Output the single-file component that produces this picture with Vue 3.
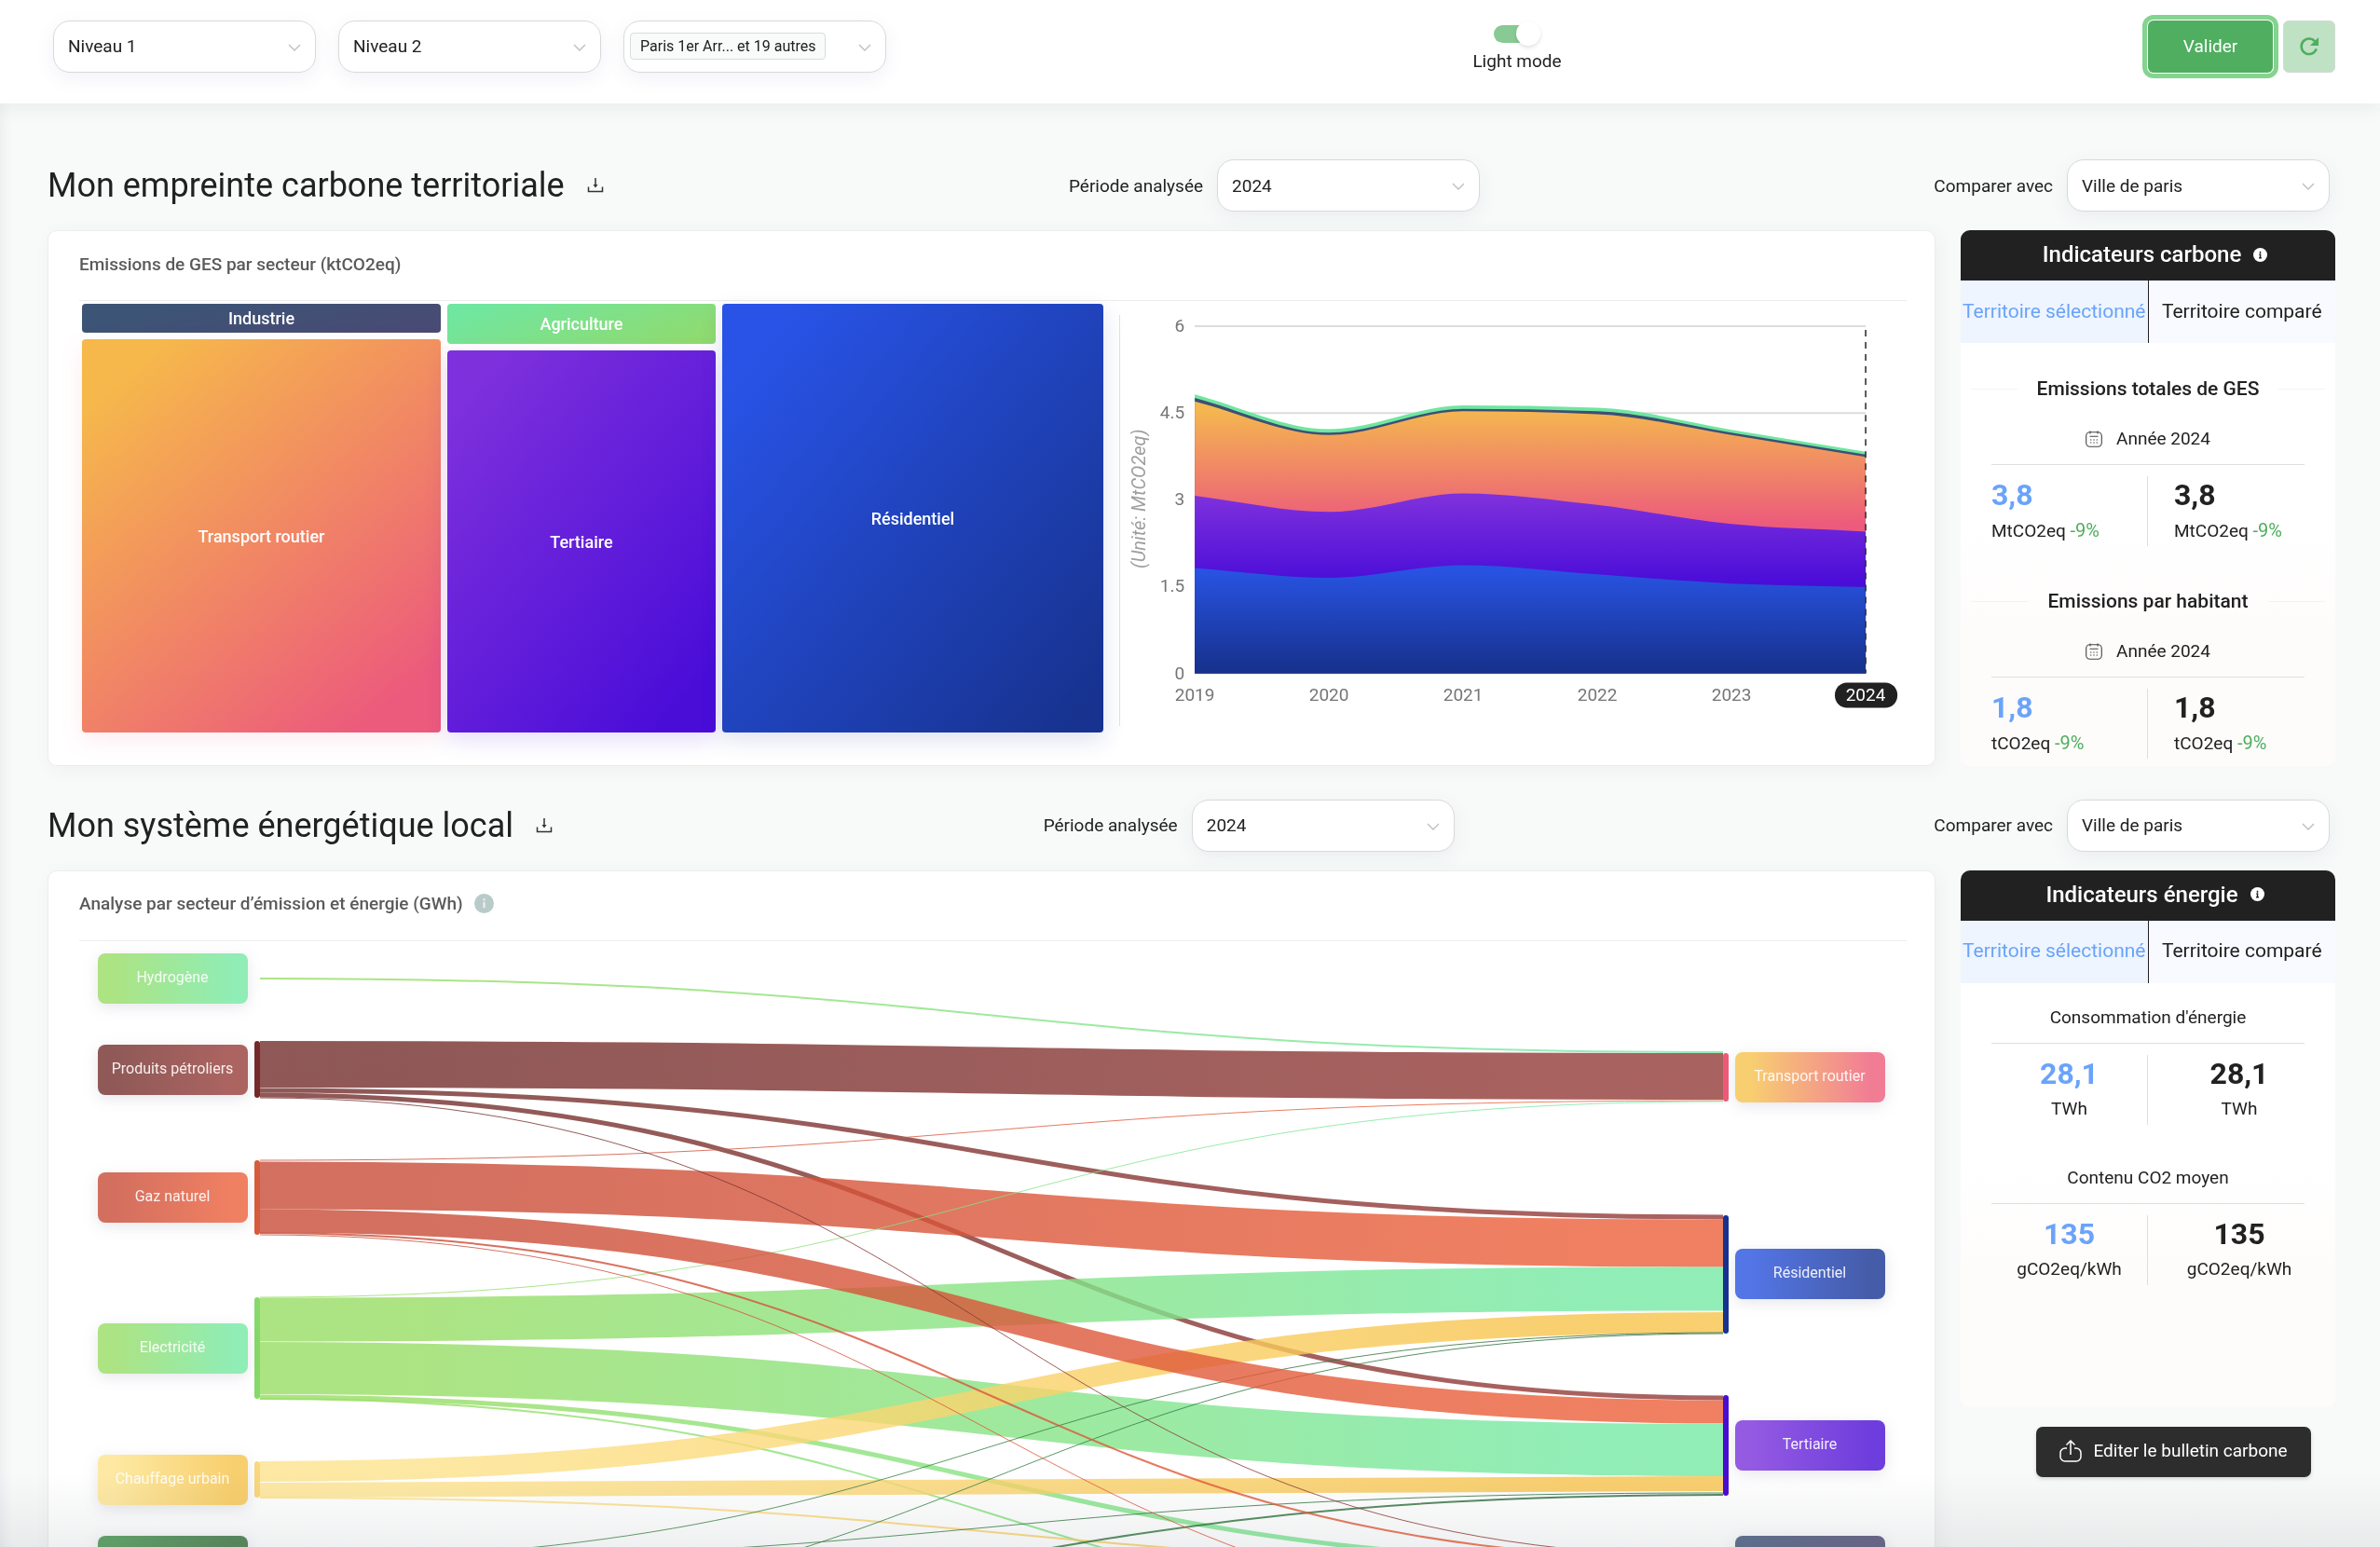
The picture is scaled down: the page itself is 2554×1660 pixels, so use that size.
<template>
  <div class="page">
    <header class="topbar">
      <div class="filters">
        <div class="select-box">
          <select v-model="level1" aria-label="Niveau 1">
            <option>Niveau 1</option>
          </select>
          <svg class="chevron" viewBox="0 0 14 10"><path d="M1 2l6 6 6-6" /></svg>
        </div>
        <div class="select-box">
          <select v-model="level2" aria-label="Niveau 2">
            <option>Niveau 2</option>
          </select>
          <svg class="chevron" viewBox="0 0 14 10"><path d="M1 2l6 6 6-6" /></svg>
        </div>
        <div class="select-box">
          <button type="button" class="multi" aria-haspopup="listbox">
            <span class="tag">Paris 1er Arr... et 19 autres</span>
          </button>
          <svg class="chevron" viewBox="0 0 14 10"><path d="M1 2l6 6 6-6" /></svg>
        </div>
      </div>
      <label class="mode">
        <input v-model="lightMode" type="checkbox" class="mode-input" />
        <span class="switch"></span>
        <span>Light mode</span>
      </label>
      <div class="actions">
        <button type="button" class="btn-validate">Valider</button>
        <button type="button" class="btn-reset" aria-label="Réinitialiser">
          <svg viewBox="0 0 24 24">
            <path d="M20.4 14.6A9 9 0 1 1 18.6 5.8" fill="none" stroke="#4fae5f" stroke-width="2.8" />
            <path d="M23 1v10H13z" fill="#4fae5f" />
          </svg>
        </button>
      </div>
    </header>

    <main class="content">
      <!-- empreinte carbone -->
      <section>
        <div class="section-head first">
          <div class="title">
            <h1>Mon empreinte carbone territoriale</h1>
            <button type="button" class="btn-download" aria-label="Télécharger">
              <svg viewBox="0 0 18 18"><path d="M9 1v9M1.5 10.5v5h15v-5" /><path class="head" d="M6.5 8h5L9 11.5z" /></svg>
            </button>
          </div>
          <div class="field">
            <label for="period-carbon">Période analysée</label>
            <div class="select-box">
              <select id="period-carbon" v-model="periodCarbon">
                <option>2024</option>
              </select>
              <svg class="chevron" viewBox="0 0 14 10"><path d="M1 2l6 6 6-6" /></svg>
            </div>
          </div>
          <div class="field">
            <label for="compare-carbon">Comparer avec</label>
            <div class="select-box">
              <select id="compare-carbon" v-model="compareCarbon">
                <option>Ville de paris</option>
              </select>
              <svg class="chevron" viewBox="0 0 14 10"><path d="M1 2l6 6 6-6" /></svg>
            </div>
          </div>
        </div>

        <div class="section-body">
          <div class="card">
            <h2 class="card-title">Emissions de GES par secteur (ktCO2eq)</h2>
            <div class="charts">
              <div class="treemap">
                <div v-for="(col, i) in treemap" :key="i" class="treemap-col" :style="{ flexGrow: col.size }">
                  <div
                    v-for="cell in col.cells"
                    :key="cell.name"
                    class="cell"
                    :class="cell.cls"
                    :style="{ flexGrow: cell.size }"
                  >
                    {{ cell.name }}
                  </div>
                </div>
              </div>
              <div class="area-chart">
                <svg viewBox="0 0 842 460">
                  <defs>
                    <linearGradient
                      v-for="s in series"
                      :id="'area-' + s.id"
                      :key="s.id"
                      gradientUnits="userSpaceOnUse"
                      x1="0"
                      :y1="yPos(Math.max(...s.values))"
                      x2="0"
                      :y2="yPos(s.bottom)"
                    >
                      <stop offset="0.05" :stop-color="s.from" />
                      <stop offset="0.95" :stop-color="s.to" />
                    </linearGradient>
                  </defs>
                  <g v-for="tick in yTicks" :key="tick">
                    <line class="grid" :x1="x0" :x2="x1" :y1="yPos(tick)" :y2="yPos(tick)" />
                    <text class="axis" :x="x0 - 11" :y="yPos(tick) + 6" text-anchor="end">{{ tick }}</text>
                  </g>
                  <path v-for="s in series" :key="s.id" :d="areaPath(s.values)" :fill="`url(#area-${s.id})`" />
                  <line class="cursor" :x1="x1" :x2="x1" :y1="yPos(6) + 4" :y2="yPos(0)" />
                  <rect x="765" y="406" width="67" height="27" rx="13" fill="#212121" />
                  <text
                    v-for="(year, i) in years"
                    :key="year"
                    class="axis"
                    :class="{ active: year === 2024 }"
                    :x="xPos(i)"
                    y="425"
                    text-anchor="middle"
                  >
                    {{ year }}
                  </text>
                  <text class="unit-label" text-anchor="middle" transform="translate(26 209) rotate(-90)">
                    (Unité: MtCO2eq)
                  </text>
                </svg>
              </div>
            </div>
          </div>

          <aside class="panel">
            <h3 class="panel-head">
              Indicateurs carbone
              <svg class="info" viewBox="0 0 16 16">
                <circle cx="8" cy="8" r="8" fill="#fff" />
                <path d="M8 4v2M6.8 7.5H8v4M6.5 11.5h3" stroke="#212121" stroke-width="1.6" fill="none" />
              </svg>
            </h3>
            <div class="tabs">
              <button type="button" class="tab active">Territoire sélectionné</button>
              <button type="button" class="tab">Territoire comparé</button>
            </div>
            <div class="carbon-body">
              <div v-for="block in carbonBlocks" :key="block.title" class="carbon-block">
                <h4 class="ruled"><span>{{ block.title }}</span></h4>
                <p class="year">
                  <svg viewBox="0 0 18 18">
                    <rect x="0.7" y="1.7" width="16.6" height="15.6" rx="4" />
                    <path d="M5 0.5v3M13 0.5v3M4.5 6.2h9" />
                    <path d="M5 10h1.4M8.3 10h1.4M11.6 10H13M5 13h1.4M8.3 13h1.4M11.6 13H13" />
                  </svg>
                  Année 2024
                </p>
                <div class="figures">
                  <div class="figure selected">
                    <strong>{{ block.value }}</strong>
                    <span>{{ block.unit }} <em>-9%</em></span>
                  </div>
                  <div class="figure">
                    <strong>{{ block.value }}</strong>
                    <span>{{ block.unit }} <em>-9%</em></span>
                  </div>
                </div>
              </div>
            </div>
          </aside>
        </div>
      </section>

      <!-- système énergétique -->
      <section>
        <div class="section-head">
          <div class="title">
            <h1>Mon système énergétique local</h1>
            <button type="button" class="btn-download" aria-label="Télécharger">
              <svg viewBox="0 0 18 18"><path d="M9 1v9M1.5 10.5v5h15v-5" /><path class="head" d="M6.5 8h5L9 11.5z" /></svg>
            </button>
          </div>
          <div class="field">
            <label for="period-energy">Période analysée</label>
            <div class="select-box">
              <select id="period-energy" v-model="periodEnergy">
                <option>2024</option>
              </select>
              <svg class="chevron" viewBox="0 0 14 10"><path d="M1 2l6 6 6-6" /></svg>
            </div>
          </div>
          <div class="field">
            <label for="compare-energy">Comparer avec</label>
            <div class="select-box">
              <select id="compare-energy" v-model="compareEnergy">
                <option>Ville de paris</option>
              </select>
              <svg class="chevron" viewBox="0 0 14 10"><path d="M1 2l6 6 6-6" /></svg>
            </div>
          </div>
        </div>

        <div class="section-body">
          <div class="card">
            <h2 class="card-title">
              Analyse par secteur d’émission et énergie (GWh)
              <svg class="info-grey" viewBox="0 0 22 22">
                <circle cx="11" cy="11" r="11" fill="#b9cbc9" />
                <path d="M11 5.5v2.4M11 9.5V16" stroke="#eef3f2" stroke-width="2" />
              </svg>
            </h2>
            <svg class="sankey" viewBox="0 0 1961 800">
              <defs>
                <linearGradient
                  v-for="(c, key) in energies"
                  :id="'link-' + key"
                  :key="key"
                  gradientUnits="userSpaceOnUse"
                  x1="194"
                  y1="0"
                  x2="1764"
                  y2="0"
                >
                  <stop offset="0.1" :stop-color="c.from" />
                  <stop offset="0.9" :stop-color="c.to" />
                </linearGradient>
                <linearGradient v-for="n in nodes" :id="'node-' + n.id" :key="n.id">
                  <stop offset="0.1" :stop-color="n.from" />
                  <stop offset="0.9" :stop-color="n.to" />
                </linearGradient>
              </defs>
              <path
                v-for="(l, i) in links"
                :key="i"
                class="link"
                :d="linkPath(l)"
                :stroke="`url(#link-${l[0]})`"
                :stroke-width="l[3]"
              />
              <g v-for="n in nodes" :key="n.id">
                <rect
                  v-if="n.bar"
                  :x="n.side === 'left' ? 188 : 1764"
                  :y="n.bar[0]"
                  width="6"
                  :height="n.bar[1] - n.bar[0]"
                  rx="3"
                  :fill="n.barColor"
                />
                <rect
                  class="pill"
                  :x="n.side === 'left' ? 20 : 1777"
                  :y="n.y"
                  width="161"
                  height="54"
                  rx="8"
                  :fill="`url(#node-${n.id})`"
                />
                <text
                  v-if="n.name"
                  class="pill-text"
                  :x="n.side === 'left' ? 100 : 1857"
                  :y="n.y + 31"
                  text-anchor="middle"
                >
                  {{ n.name }}
                </text>
              </g>
            </svg>
          </div>

          <div class="side">
            <aside class="panel">
              <h3 class="panel-head">
                Indicateurs énergie
                <svg class="info" viewBox="0 0 16 16">
                  <circle cx="8" cy="8" r="8" fill="#fff" />
                  <path d="M8 4v2M6.8 7.5H8v4M6.5 11.5h3" stroke="#212121" stroke-width="1.6" fill="none" />
                </svg>
              </h3>
              <div class="tabs">
                <button type="button" class="tab active">Territoire sélectionné</button>
                <button type="button" class="tab">Territoire comparé</button>
              </div>
              <div class="energy-body">
                <div v-for="block in energyBlocks" :key="block.title" class="energy-block">
                  <h4 class="plain">{{ block.title }}</h4>
                  <div class="figures centered">
                    <div class="figure selected">
                      <strong>{{ block.value }}</strong>
                      <span>{{ block.unit }}</span>
                    </div>
                    <div class="figure">
                      <strong>{{ block.value }}</strong>
                      <span>{{ block.unit }}</span>
                    </div>
                  </div>
                </div>
              </div>
            </aside>
            <button type="button" class="btn-edit">
              <svg viewBox="0 0 24 24">
                <path d="M8 9H6a5 5 0 0 0-5 5v4a5 5 0 0 0 5 5h12a5 5 0 0 0 5-5v-4a5 5 0 0 0-5-5h-2" />
                <path d="M12 16V1.500M7.500 5.500L12 1l4.500 4.500" />
              </svg>
              Editer le bulletin carbone
            </button>
          </div>
        </div>
      </section>
    </main>
    <div class="fade"></div>
  </div>
</template>

<script setup>
import { ref } from "vue";

const level1 = ref("Niveau 1");
const level2 = ref("Niveau 2");
const lightMode = ref(true);
const periodCarbon = ref("2024");
const periodEnergy = ref("2024");
const compareCarbon = ref("Ville de paris");
const compareEnergy = ref("Ville de paris");

const treemap = [
  {
    size: 385,
    cells: [
      { name: "Industrie", cls: "industry", size: 31 },
      { name: "Transport routier", cls: "transport", size: 422 },
    ],
  },
  {
    size: 288,
    cells: [
      { name: "Agriculture", cls: "agriculture", size: 43 },
      { name: "Tertiaire", cls: "tertiary", size: 410 },
    ],
  },
  { size: 409, cells: [{ name: "Résidentiel", cls: "residential", size: 460 }] },
];

// area chart
const years = [2019, 2020, 2021, 2022, 2023, 2024];
const yTicks = [0, 1.5, 3, 4.5, 6];
const x0 = 79;
const x1 = 798;
const xPos = (i) => x0 + (i * (x1 - x0)) / 5;
const yPos = (v) => 396 - v * 62;

// cumulated values, largest first. bottom = end of the band's gradient
const series = [
  { id: "agriculture", from: "#70e6a0", to: "#70e6a0", bottom: 0, values: [4.82, 4.22, 4.63, 4.59, 4.21, 3.83] },
  { id: "industry", from: "#3c5075", to: "#3c5075", bottom: 0, values: [4.76, 4.16, 4.57, 4.53, 4.16, 3.78] },
  { id: "transport", from: "#f5b84e", to: "#ec5a7c", bottom: 2.45, values: [4.7, 4.12, 4.53, 4.48, 4.12, 3.74] },
  { id: "tertiary", from: "#7d30dc", to: "#4a0dd8", bottom: 1.49, values: [3.07, 2.79, 3.11, 2.91, 2.58, 2.45] },
  { id: "residential", from: "#2853e2", to: "#17328f", bottom: 0, values: [1.82, 1.65, 1.87, 1.71, 1.55, 1.49] },
];

// smooth curve, flat on local extremes
const areaPath = (values) => {
  const pts = values.map((v, i) => [xPos(i), yPos(v)]);
  const step = pts[1][0] - pts[0][0];
  const slopes = pts.map((p, i) => {
    if (i === 0) return (pts[1][1] - p[1]) / step;
    if (i === pts.length - 1) return (p[1] - pts[i - 1][1]) / step;
    const a = (p[1] - pts[i - 1][1]) / step;
    const b = (pts[i + 1][1] - p[1]) / step;
    return a * b <= 0 ? 0 : Math.sign(a) * Math.min(Math.abs(a), Math.abs(b), Math.abs(a + b) / 4) * 2;
  });
  let d = `M${pts[0][0]} ${pts[0][1]}`;
  for (let i = 1; i < pts.length; i++) {
    const [px, py] = pts[i - 1];
    const [x, y] = pts[i];
    d += `C${px + step / 3} ${py + (slopes[i - 1] * step) / 3} ${x - step / 3} ${y - (slopes[i] * step) / 3} ${x} ${y}`;
  }
  return `${d}V${yPos(0)}H${x0}Z`;
};

// sankey
const energies = {
  oil: { from: "#732f2d", to: "#933b38" },
  gas: { from: "#c84c38", to: "#ec603a" },
  elec: { from: "#98dd64", to: "#76e9a4" },
  heat: { from: "#fde38d", to: "#f7c34b" },
  wood: { from: "#3f8f4c", to: "#2c6b3a" },
};

const nodes = [
  { id: "h2", side: "left", name: "Hydrogène", y: 13, from: "#ace383", to: "#90edb5" },
  { id: "oil", side: "left", name: "Produits pétroliers", y: 111, bar: [107, 168], barColor: "#742a2a", from: "#8f5957", to: "#ac6461" },
  { id: "gas", side: "left", name: "Gaz naturel", y: 248, bar: [235, 315], barColor: "#d75c3c", from: "#d36f5f", to: "#f08062" },
  { id: "elec", side: "left", name: "Electricité", y: 410, bar: [382, 491], barColor: "#86d96b", from: "#ace383", to: "#90edb5" },
  { id: "heat", side: "left", name: "Chauffage urbain", y: 551, bar: [558, 597], barColor: "#fbd97f", from: "#fde9a3", to: "#f8cf6e" },
  { id: "wood", side: "left", y: 638, from: "#65a56d", to: "#5c8c62" },
  { id: "transport", side: "right", name: "Transport routier", y: 119, bar: [120, 172], barColor: "#f05a78", from: "#f8cf70", to: "#f17d95" },
  { id: "residential", side: "right", name: "Résidentiel", y: 330, bar: [294, 421], barColor: "#17328f", from: "#5375e6", to: "#455ca8" },
  { id: "tertiary", side: "right", name: "Tertiaire", y: 514, bar: [487, 595], barColor: "#4a0dd2", from: "#945ae2", to: "#6e3ddd" },
  { id: "industry", side: "right", y: 638, from: "#637391", to: "#6d6a8c" },
];

// [energy, y source, y target, thickness]
const links = [
  ["elec", 40, 119, 2],
  ["oil", 132, 145, 50],
  ["oil", 160, 296, 5],
  ["oil", 165, 490, 5],
  ["gas", 235, 171, 1],
  ["gas", 262, 324, 51],
  ["elec", 382, 172, 1],
  ["elec", 406, 373, 47],
  ["elec", 458, 546, 56],
  ["elec", 489, 669, 5],
  ["elec", 491, 738, 2],
  ["heat", 569, 409, 22],
  ["heat", 589, 582, 16],
  ["heat", 597, 671, 2],
  ["wood", 664, 420, 1],
  ["wood", 732, 421, 1],
  ["wood", 665, 592, 1],
  ["wood", 730, 594, 2],
  ["gas", 300, 505, 25],
  ["gas", 313, 663, 2],
  ["gas", 315, 736, 1],
  ["oil", 168, 660, 1],
];
const linkPath = ([, from, to]) => `M194 ${from}C979 ${from} 979 ${to} 1764 ${to}`;

const carbonBlocks = [
  { title: "Emissions totales de GES", value: "3,8", unit: "MtCO2eq" },
  { title: "Emissions par habitant", value: "1,8", unit: "tCO2eq" },
];
const energyBlocks = [
  { title: "Consommation d'énergie", value: "28,1", unit: "TWh" },
  { title: "Contenu CO2 moyen", value: "135", unit: "gCO2eq/kWh" },
];
</script>

<style>
body {
  margin: 0;
  background: #f8faf9;
}
</style>

<style scoped>
* {
  box-sizing: border-box;
}
.page {
  position: relative;
  height: 100vh;
  overflow: hidden;
  background: #f8faf9;
  color: #212121;
  font-family: Roboto, "Liberation Sans", sans-serif;
  font-size: 19px;
  box-shadow: inset 12px 0 14px -10px rgba(40, 50, 90, 0.08);
}
h1,
h2,
h3,
h4,
p {
  margin: 0;
}
button,
select {
  font: inherit;
  color: inherit;
  border: none;
  cursor: pointer;
}
.topbar {
  display: flex;
  align-items: center;
  justify-content: space-between;
  height: 111px;
  padding: 0 48px 12px 57px;
  background: #fff;
  box-shadow: 0 4px 20px rgba(30, 50, 60, 0.08);
}
.filters {
  display: flex;
  gap: 24px;
}
.select-box {
  position: relative;
  width: 282px;
}
.select-box select,
.multi {
  appearance: none;
  display: block;
  width: 100%;
  height: 56px;
  padding: 0 15px;
  background: #fff;
  border: 1px solid #d9d9d9;
  border-radius: 18px;
  box-shadow: 0 6px 20px rgba(80, 90, 150, 0.08);
  text-align: left;
}
.select-box .multi {
  padding: 0 6px;
}
.tag {
  display: inline-block;
  padding: 0 10px;
  line-height: 27px;
  font-size: 16px;
  background: #f9fbfa;
  border: 1px solid #dadcdb;
  border-radius: 4px;
}
.chevron {
  position: absolute;
  top: 24px;
  right: 16px;
  width: 14px;
  height: 10px;
  fill: none;
  stroke: #bdbdbd;
  stroke-width: 1.3;
  pointer-events: none;
}
.mode {
  display: flex;
  flex-direction: column;
  align-items: center;
  gap: 4px;
  cursor: pointer;
}
.mode-input {
  position: absolute;
  opacity: 0;
}
.switch {
  display: flex;
  align-items: center;
  width: 50px;
  height: 28px;
}
.switch::before {
  content: "";
  width: 38px;
  height: 19px;
  margin-right: -14px;
  border-radius: 10px;
  background: #88c994;
}
.switch::after {
  content: "";
  width: 26px;
  height: 26px;
  border-radius: 50%;
  background: #fff;
  box-shadow: 0 2px 4px rgba(0, 0, 0, 0.12);
}
.actions {
  display: flex;
  justify-content: flex-end;
  gap: 11px;
}
.btn-validate {
  width: 134px;
  height: 56px;
  color: #fff;
  background: #4fae5f;
  border-radius: 6px;
  box-shadow: 0 0 0 1px #fff, 0 0 0 6px #84d38f;
}
.btn-reset {
  display: flex;
  align-items: center;
  justify-content: center;
  width: 56px;
  height: 56px;
  background: #bfe2c4;
  border: 1px solid #d3d9d4;
  border-radius: 6px;
}
.btn-reset svg {
  width: 22px;
  height: 22px;
}
.content {
  padding: 0 48px 0 51px;
}
.section-head {
  display: flex;
  align-items: center;
  justify-content: space-between;
  padding: 36px 6px 20px 0;
}
.section-head.first {
  padding-top: 60px;
}
.title {
  display: flex;
  align-items: center;
  gap: 24px;
  padding-right: 12px;
}
h1 {
  font-size: 36px;
  font-weight: 400;
}
.btn-download {
  padding: 0;
  background: none;
}
.btn-download svg {
  display: block;
  width: 18px;
  height: 18px;
  fill: none;
  stroke: #333;
  stroke-width: 1.5;
}
.btn-download .head {
  fill: #333;
  stroke: none;
}
.field {
  display: flex;
  align-items: center;
  gap: 15px;
}
.section-body {
  display: flex;
  gap: 27px;
}
.card {
  flex: 1;
  min-width: 0;
  padding: 0 30px 34px 33px;
  background: #fff;
  border: 1px solid #ebeeec;
  border-radius: 10px;
  box-shadow: 4px 4px 20px rgba(40, 60, 70, 0.05);
}
.card-title {
  display: flex;
  align-items: center;
  gap: 12px;
  height: 75px;
  padding-bottom: 4px;
  font-size: 19px;
  font-weight: 500;
  color: #5a5a5a;
  border-bottom: 1px solid #ededed;
}
.info-grey {
  width: 21px;
  height: 21px;
}
.charts {
  display: flex;
  padding-top: 3px;
}
.treemap {
  display: flex;
  flex: 1097;
  gap: 7px;
  padding-left: 3px;
  height: 460px;
}
.treemap-col {
  display: flex;
  flex: 1 1 0;
  flex-direction: column;
  gap: 7px;
}
.cell {
  display: flex;
  flex-basis: 0;
  align-items: center;
  justify-content: center;
  min-height: 0;
  color: #fff;
  font-size: 18px;
  font-weight: 500;
  border-radius: 4px;
}
.industry {
  background: linear-gradient(165deg, #3c5476 20%, #4a4a74);
}
.transport {
  background: linear-gradient(140deg, #f6b84b 10%, #ec5a7c 90%);
  box-shadow: 0 8px 24px rgba(236, 90, 124, 0.12);
}
.agriculture {
  background: linear-gradient(160deg, #70e6a0 10%, #8fdb70 90%);
}
.tertiary {
  background: linear-gradient(130deg, #7d30dc 10%, #4a0dd8 90%);
  box-shadow: 0 8px 24px rgba(74, 13, 216, 0.14);
}
.residential {
  background: linear-gradient(130deg, #2853e6 10%, #17328f 95%);
  box-shadow: 0 8px 24px rgba(23, 50, 143, 0.14);
}
.area-chart {
  position: relative;
  flex: 844;
  margin-left: 19px;
}
.area-chart::before {
  content: "";
  position: absolute;
  left: -2px;
  top: 12px;
  bottom: 8px;
  border-left: 1px solid #dfe0e2;
}
.area-chart svg {
  display: block;
  width: 100%;
}
.grid {
  stroke: #dcdcdc;
  stroke-width: 2;
}
.axis {
  font-size: 19px;
  fill: #757575;
}
.axis.active {
  fill: #fff;
}
.cursor {
  stroke: #333;
  stroke-width: 1.6;
  stroke-dasharray: 7 6;
}
.unit-label {
  font-size: 20px;
  font-style: italic;
  fill: #9e9e9e;
}
.panel {
  width: 402px;
  overflow: hidden;
  border-radius: 10px;
  background: linear-gradient(#fff 55%, #fefcfb 75%);
}
.panel-head {
  display: flex;
  align-items: center;
  justify-content: center;
  gap: 13px;
  height: 54px;
  padding: 0 0 2px 15px;
  font-size: 24px;
  font-weight: 500;
  color: #fff;
  background: #212121;
}
.info {
  width: 15px;
  height: 15px;
}
.tabs {
  display: flex;
  height: 67px;
}
.tab {
  flex: 1 1 0;
  padding: 0 0 2px;
  font-size: 21px;
  white-space: nowrap;
  background: #f9faff;
}
.tab.active {
  color: #6aa3fa;
  background: #eef5fe;
  border-right: 1px solid #212121;
}
.carbon-body {
  height: 453px;
}
.carbon-block {
  height: 228px;
  padding-top: 36px;
}
.ruled {
  display: flex;
  align-items: center;
  gap: 21px;
  padding: 0 11px;
  font-size: 21px;
  line-height: 26px;
  font-weight: 500;
}
.ruled::before,
.ruled::after {
  content: "";
  flex: 1;
  border-top: 1px solid #f1f2f4;
}
.year {
  display: flex;
  align-items: center;
  justify-content: center;
  gap: 15px;
  margin: 28px 33px 0;
  padding-bottom: 14px;
  line-height: 26px;
  border-bottom: 1px solid #dedede;
}
.year svg {
  width: 18px;
  height: 18px;
  fill: none;
  stroke: #444;
  stroke-width: 1.1;
}
.figures {
  display: flex;
  margin: 12px 33px 0;
}
.figure {
  display: flex;
  flex-direction: column;
  width: 50%;
  gap: 7px;
  height: 75px;
  padding-left: 28px;
}
.figure.selected {
  padding-left: 0;
  border-right: 1px solid #dedede;
}
.figure strong {
  font-size: 32px;
  line-height: 40px;
  font-weight: 700;
}
.figure.selected strong {
  color: #6aa3fa;
}
.figure span {
  line-height: 22px;
}
.figure em {
  font-style: normal;
  font-size: 20px;
  color: #4fae5f;
}
.centered .figure {
  align-items: center;
}
.energy-body {
  height: 455px;
}
.energy-block {
  height: 172px;
  padding-top: 24px;
}
.plain {
  margin: 0 33px;
  padding-bottom: 14px;
  font-size: 19px;
  line-height: 26px;
  font-weight: 400;
  text-align: center;
  border-bottom: 1px solid #dedede;
}
.side {
  display: flex;
  flex-direction: column;
  align-items: flex-end;
  gap: 21px;
}
.btn-edit {
  display: flex;
  align-items: center;
  justify-content: center;
  gap: 12px;
  width: 295px;
  height: 54px;
  padding: 0 0 2px;
  margin-right: 26px;
  color: #fff;
  background: #2d2d2d;
  border-radius: 7px;
  box-shadow: 0 2px 4px rgba(0, 0, 0, 0.15);
}
.btn-edit svg {
  width: 24px;
  height: 24px;
  fill: none;
  stroke: #fff;
  stroke-width: 1.5;
}
.sankey {
  display: block;
  width: 100%;
}
.link {
  fill: none;
  opacity: 0.8;
}
.pill {
  filter: drop-shadow(0 4px 8px rgba(50, 60, 90, 0.12));
}
.pill-text {
  font-size: 16px;
  fill: #fff;
  fill-opacity: 0.9;
}
.fade {
  position: absolute;
  left: 0;
  right: 0;
  bottom: 0;
  height: 80px;
  background: linear-gradient(#fff, #eff0f1);
  mix-blend-mode: multiply;
  pointer-events: none;
}
</style>
